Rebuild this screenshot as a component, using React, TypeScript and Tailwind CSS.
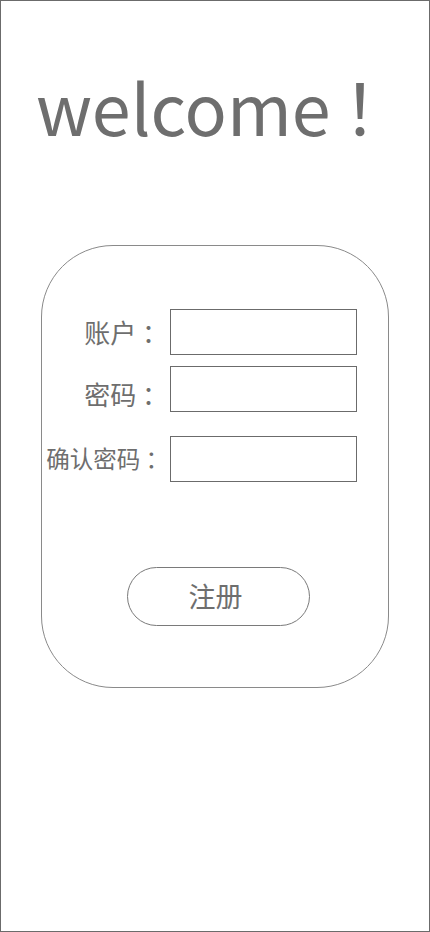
export default function App() {
  const font = { fontFamily: '"Noto Sans CJK SC", "Noto Sans", sans-serif' };
  return (
    <div
      className="w-[430px] h-[932px] border border-[#6b6b6b] bg-white text-[#6e6e6e] flex flex-col"
      style={font}
    >
      {/* Title */}
      <h1 className="mt-[60px] ml-[35px] text-[70px] leading-[90px] font-normal whitespace-nowrap">
        welcome<span className="ml-[12px]">！</span>
      </h1>

      {/* Register card */}
      <div className="mt-[94px] ml-[40px] w-[348px] h-[443px] border border-[#8a8a8a] rounded-[72px] flex flex-col">
        <div className="mt-[63px] flex flex-col">
          <div className="flex items-center">
            <label className="w-[128px] text-right text-[26px] leading-none pr-[2px]">账户 ：</label>
            <input className="w-[187px] h-[46px] border border-[#6b6b6b] outline-none" />
          </div>
          <div className="mt-[11px] flex items-center">
            <label className="w-[128px] text-right text-[26px] leading-none pr-[2px] pt-[10px]">密码 ：</label>
            <input type="password" className="w-[187px] h-[46px] border border-[#6b6b6b] outline-none" />
          </div>
          <div className="mt-[24px] flex items-center">
            <label className="w-[128px] text-right text-[23.5px] leading-none pr-[1px] whitespace-nowrap">确认密码 ：</label>
            <input type="password" className="w-[187px] h-[46px] border border-[#6b6b6b] outline-none" />
          </div>
        </div>

        <button className="mt-[85px] ml-[85px] w-[183px] h-[59px] border border-[#7a7a7a] rounded-full text-[27px] text-[#6e6e6e] pr-[6px]">
          注册
        </button>
      </div>
    </div>
  );
}
